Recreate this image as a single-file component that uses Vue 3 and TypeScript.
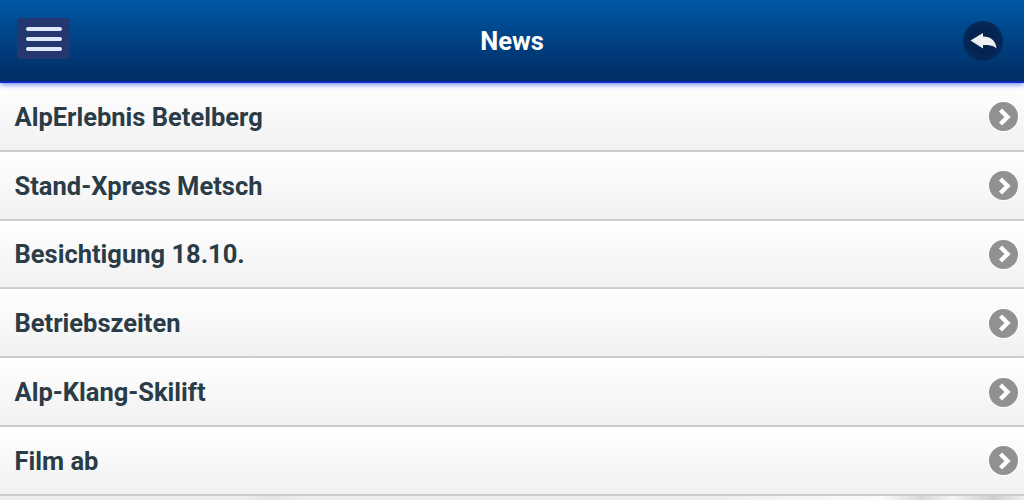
<script setup lang="ts">
const items: string[] = [
  'AlpErlebnis Betelberg',
  'Stand-Xpress Metsch',
  'Besichtigung 18.10.',
  'Betriebszeiten',
  'Alp-Klang-Skilift',
  'Film ab',
]
</script>

<template>
  <div class="page">
    <header class="top-bar">
      <button class="menu-btn" type="button" aria-label="Menu">
        <span></span><span></span><span></span>
      </button>
      <h1 class="title">News</h1>
      <button class="back-btn" type="button" aria-label="Back">
        <svg width="27" height="16" viewBox="0 0 27 16">
          <path d="M0.500 7.500 L13 0 L13 3.500 C21 3.500 26 8 26.500 15.500 C24 12.500 19 12 13 12 L13 15.500 Z" fill="#eef0f2" />
        </svg>
      </button>
    </header>
    <ul class="list">
      <li v-for="item in items" :key="item" class="row">
        <span class="label">{{ item }}</span>
        <span class="arrow">
          <svg width="20" height="20" viewBox="0 0 20 20">
            <path d="M6.500 3 L13.500 10 L6.500 17" fill="none" stroke="#fff" stroke-width="4.400" />
          </svg>
        </span>
      </li>
    </ul>
  </div>
</template>

<style>
body {
  margin: 0;
  background: #eceef0;
}
</style>

<style scoped>
.page {
  width: 1024px;
  height: 500px;
  overflow: hidden;
  font-family: Roboto, "Liberation Sans", sans-serif;
  /* the marble texture only peeks out under the last row */
  background: linear-gradient(90deg, #ebedf0 0, #eceef0 24%, #e2e3e5 26%, #eceef0 30%, #eceef0 70%, #fbfbfb 86%, #d8d8d8 90%, #f4f4f4 93%, #cfcfcf 97%, #eeeeee 100%);
}

.top-bar {
  height: 83px;
  box-sizing: border-box;
  padding: 0 21px 0 17px;
  display: flex;
  align-items: center;
  justify-content: space-between;
  position: relative;
  background: linear-gradient(#0058a4, #002c63);
  border-bottom: 2px solid #0a2cc4;
  box-shadow: 0 2px 5px rgba(40, 70, 230, 0.6);
}

.menu-btn {
  width: 53px;
  height: 41px;
  margin-top: -4px;
  padding: 0;
  border: 0;
  border-radius: 3px;
  background: #25376f;
  display: flex;
  flex-direction: column;
  align-items: center;
  justify-content: center;
  gap: 6px;
}

.menu-btn span {
  width: 36px;
  height: 4px;
  border-radius: 2px;
  background: #dfe7fb;
}

.title {
  position: absolute;
  left: 0;
  right: 0;
  top: 0;
  margin: 0;
  line-height: 83px;
  text-align: center;
  font-size: 25.500px;
  font-weight: 700;
  color: #fff;
}

.back-btn {
  width: 40px;
  height: 40px;
  padding: 0;
  border: 0;
  border-radius: 50%;
  background: radial-gradient(circle, #04234f 40%, #052f63 100%);
  display: flex;
  align-items: center;
  justify-content: center;
}

.list {
  margin: 0;
  padding: 0;
  list-style: none;
}

.row {
  height: 68.800px;
  box-sizing: border-box;
  padding: 1px 6px 0 14.500px;
  display: flex;
  align-items: center;
  justify-content: space-between;
  background: linear-gradient(#ffffff, #f1f1f1);
  border-bottom: 2px solid #cdcdcd;
}

.label {
  font-size: 25.500px;
  font-weight: 700;
  color: #2a3c47;
}

.arrow {
  width: 29px;
  height: 29px;
  border-radius: 50%;
  background: #919191;
  box-shadow: 0 0 0 1px rgba(255, 255, 255, 0.7);
  display: flex;
  align-items: center;
  justify-content: center;
}
</style>
